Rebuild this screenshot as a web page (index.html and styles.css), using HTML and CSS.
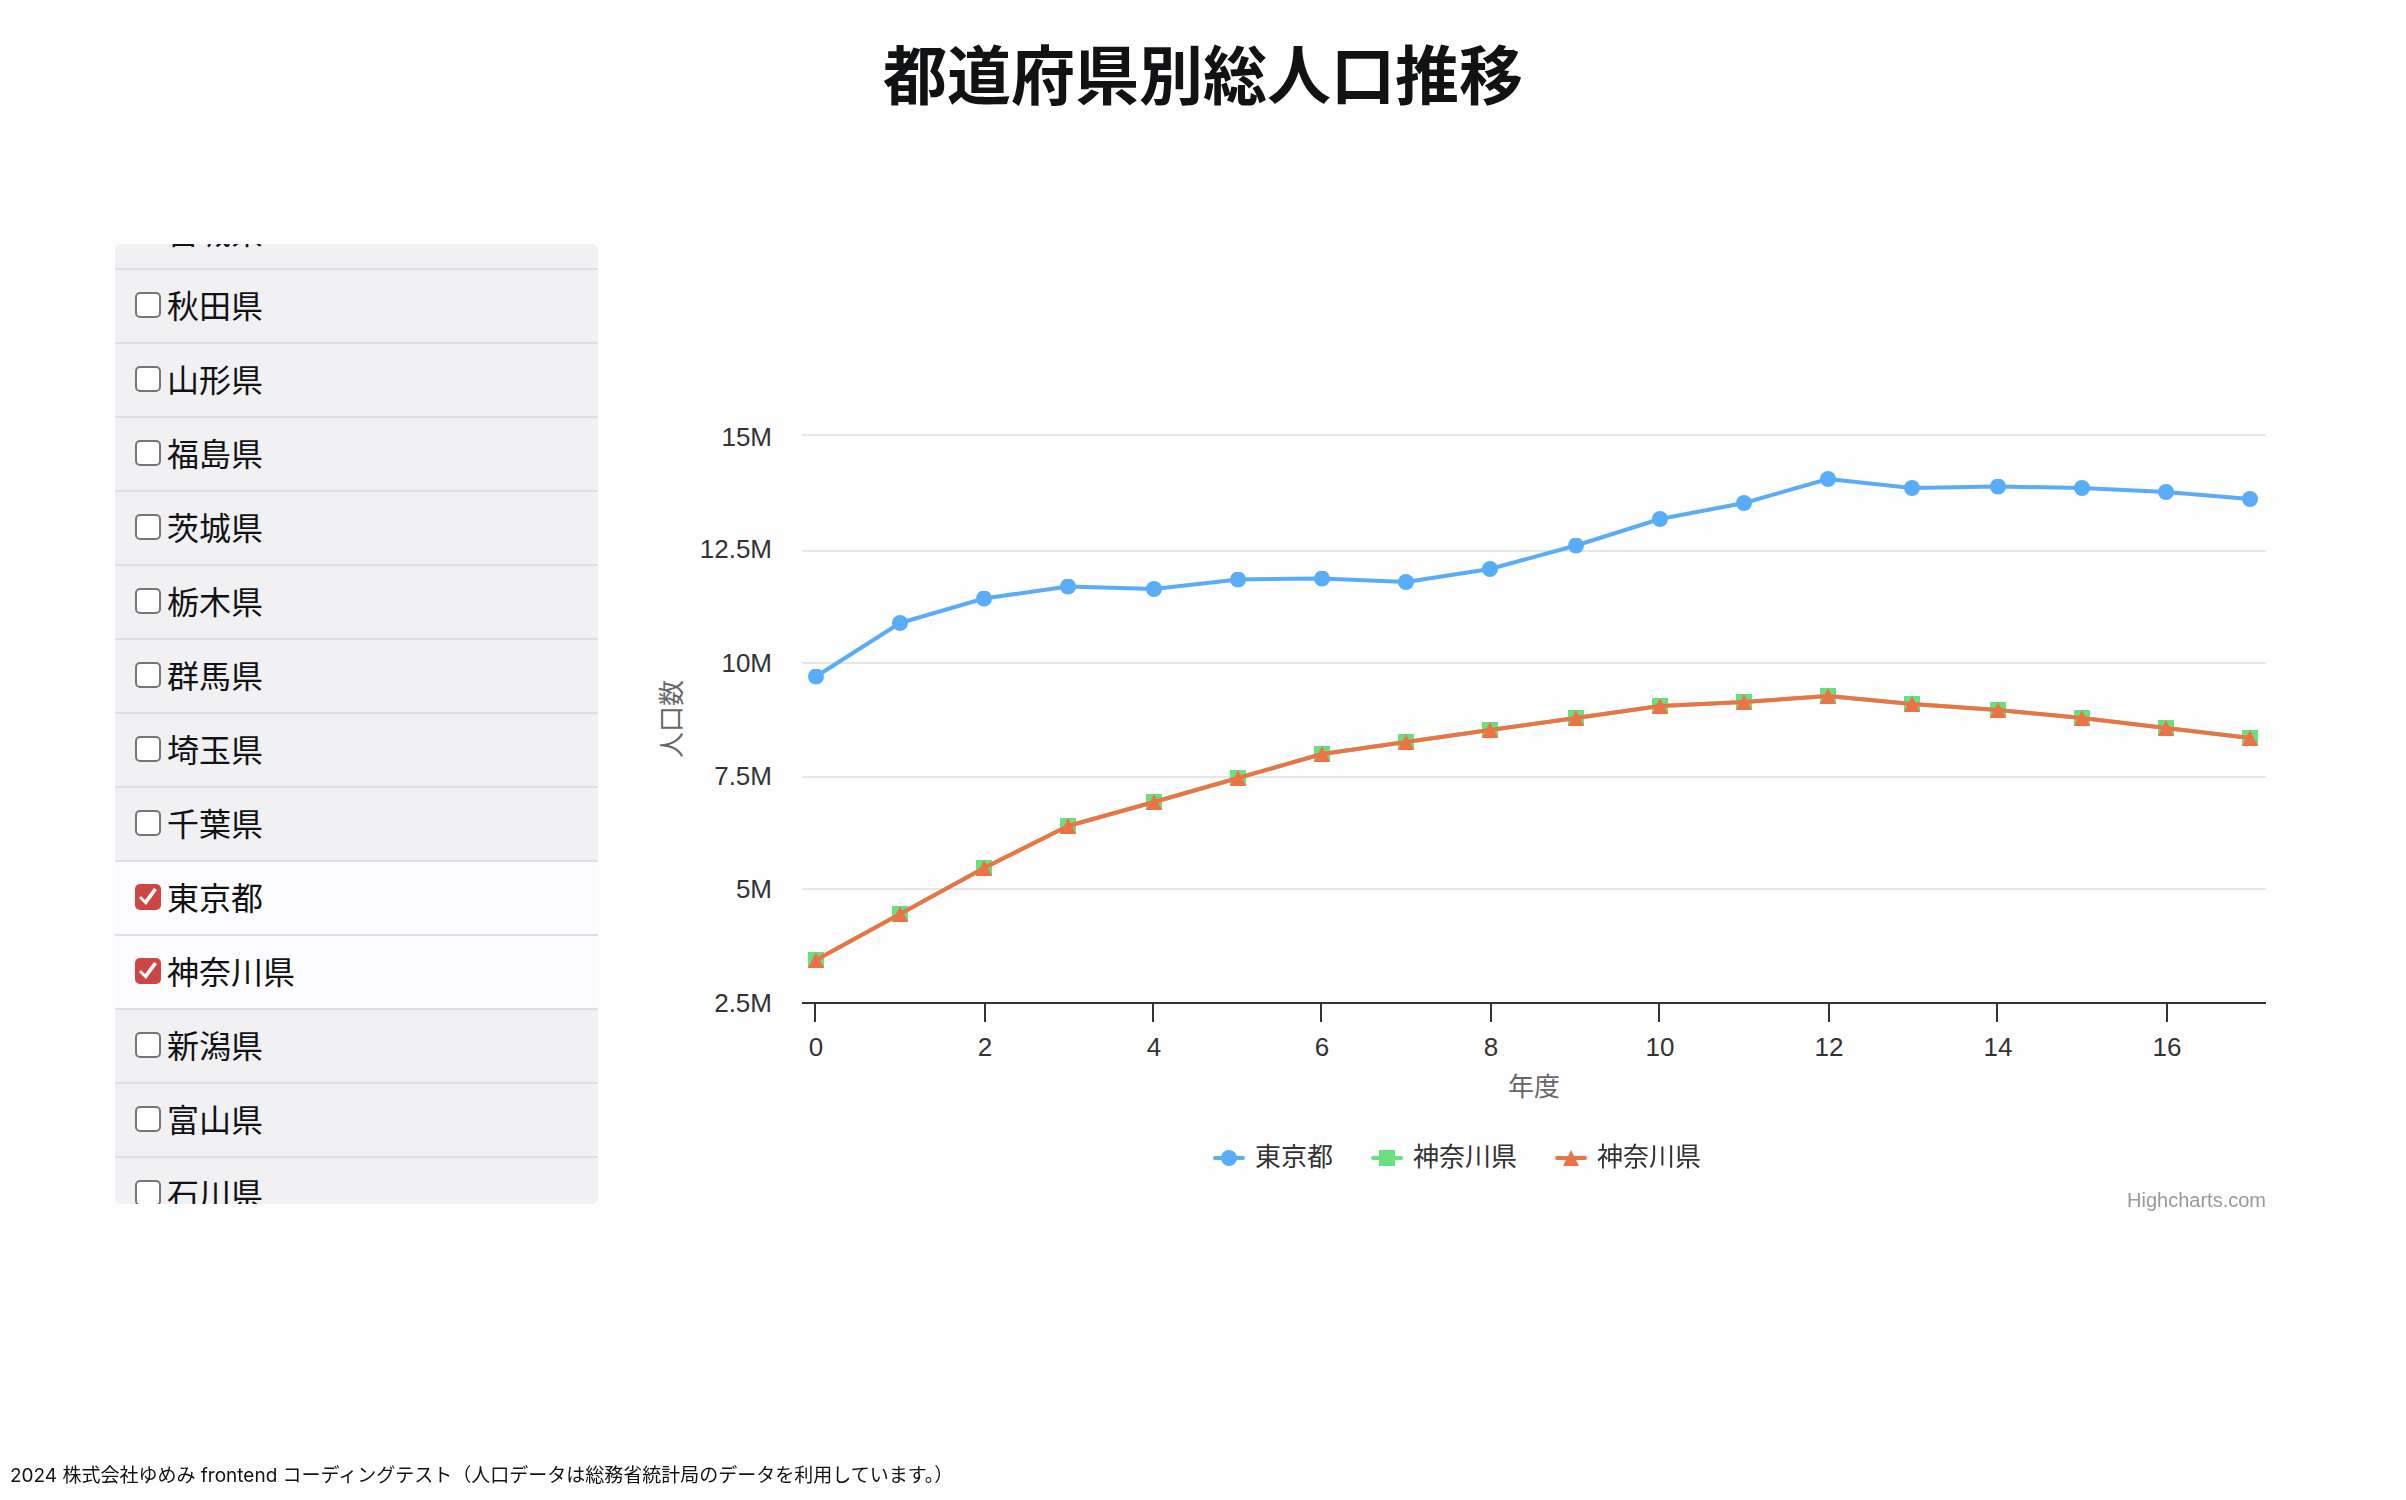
FILE: index.html
```html
<!DOCTYPE html>
<html lang="ja">
<head>
<meta charset="utf-8">
<meta name="viewport" content="width=device-width, initial-scale=1">
<title>都道府県別総人口推移</title>
<link rel="stylesheet" href="styles.css">
</head>
<body>
<header class="header"><h1 class="title">都道府県別総人口推移</h1></header>
<main class="main">
<ul class="prefs" id="prefs">
<li><label class="pref"><input type="checkbox"><span class="pref-name">北海道</span></label></li>
<li><label class="pref"><input type="checkbox"><span class="pref-name">青森県</span></label></li>
<li><label class="pref"><input type="checkbox"><span class="pref-name">岩手県</span></label></li>
<li><label class="pref"><input type="checkbox"><span class="pref-name">宮城県</span></label></li>
<li><label class="pref"><input type="checkbox"><span class="pref-name">秋田県</span></label></li>
<li><label class="pref"><input type="checkbox"><span class="pref-name">山形県</span></label></li>
<li><label class="pref"><input type="checkbox"><span class="pref-name">福島県</span></label></li>
<li><label class="pref"><input type="checkbox"><span class="pref-name">茨城県</span></label></li>
<li><label class="pref"><input type="checkbox"><span class="pref-name">栃木県</span></label></li>
<li><label class="pref"><input type="checkbox"><span class="pref-name">群馬県</span></label></li>
<li><label class="pref"><input type="checkbox"><span class="pref-name">埼玉県</span></label></li>
<li><label class="pref"><input type="checkbox"><span class="pref-name">千葉県</span></label></li>
<li><label class="pref"><input type="checkbox" checked><span class="pref-name">東京都</span></label></li>
<li><label class="pref"><input type="checkbox" checked><span class="pref-name">神奈川県</span></label></li>
<li><label class="pref"><input type="checkbox"><span class="pref-name">新潟県</span></label></li>
<li><label class="pref"><input type="checkbox"><span class="pref-name">富山県</span></label></li>
<li><label class="pref"><input type="checkbox"><span class="pref-name">石川県</span></label></li>
<li><label class="pref"><input type="checkbox"><span class="pref-name">福井県</span></label></li>
</ul>
<section class="chart" aria-label="人口推移グラフ">
<svg class="plot" viewBox="0 0 1658 700" role="img" aria-label="年度ごとの人口数">
<defs>
<marker id="dot" markerUnits="userSpaceOnUse" markerWidth="16" markerHeight="16" refX="8" refY="8"><circle class="fill-blue" cx="8" cy="8" r="8"/></marker>
<marker id="square" markerUnits="userSpaceOnUse" markerWidth="16" markerHeight="16" refX="8" refY="8"><path class="fill-green" d="M0 0h16v16H0z"/></marker>
<marker id="triangle" markerUnits="userSpaceOnUse" markerWidth="16" markerHeight="16" refX="8" refY="8"><path class="fill-orange" d="M8 0l8 16H0z"/></marker>
</defs>
<path class="grid" d="M174 19H1638M174 135H1638M174 247H1638M174 361H1638M174 473H1638"/>
<path class="axis" d="M174 587H1638M187 587v19M357 587v19M525 587v19M693 587v19M863 587v19M1031 587v19M1201 587v19M1369 587v19M1539 587v19"/>
<polyline class="series blue" points="188,260.5 272,207 356,182.5 440,170.5 526,173 610,163.5 694,162.5 778,166 862,153 948,129.5 1032,103 1116,87 1200,63 1284,72 1370,70.5 1454,72 1538,76 1622,83"/>
<polyline class="series green" points="188,544 272,498 356,452 440,410 526,386 610,362 694,338 778,326 862,314 948,302 1032,290 1116,286 1200,280 1284,288 1370,294 1454,302 1538,312 1622,322"/>
<polyline class="series orange" points="188,544 272,498 356,452 440,410 526,386 610,362 694,338 778,326 862,314 948,302 1032,290 1116,286 1200,280 1284,288 1370,294 1454,302 1538,312 1622,322"/>
<g class="tick-label" text-anchor="end">
<text x="144" y="30">15M</text><text x="144" y="142">12.5M</text><text x="144" y="256">10M</text><text x="144" y="369">7.5M</text><text x="144" y="482">5M</text><text x="144" y="596">2.5M</text>
</g>
<g class="tick-label" text-anchor="middle">
<text x="188" y="640">0</text><text x="357" y="640">2</text><text x="526" y="640">4</text><text x="694" y="640">6</text><text x="863" y="640">8</text><text x="1032" y="640">10</text><text x="1201" y="640">12</text><text x="1370" y="640">14</text><text x="1539" y="640">16</text>
</g>
<g class="axis-title" text-anchor="middle">
<text x="906" y="680">年度</text>
<text transform="translate(53 303) rotate(-90)">人口数</text>
</g>
</svg>
<div class="legend">
<button class="legend-item" type="button"><svg class="symbol" viewBox="0 0 32 16"><path class="series blue-line" d="M2 8h28"/><circle class="fill-blue" cx="16" cy="8" r="8"/></svg>東京都</button>
<button class="legend-item" type="button"><svg class="symbol" viewBox="0 0 32 16"><path class="series green-line" d="M2 8h28"/><path class="fill-green" d="M8 0h16v16H8z"/></svg>神奈川県</button>
<button class="legend-item" type="button"><svg class="symbol" viewBox="0 0 32 16"><path class="series orange-line" d="M2 8h28"/><path class="fill-orange" d="M16 0l8 16H8z"/></svg>神奈川県</button>
</div>
<a class="credits" href="https://www.highcharts.com/">Highcharts.com</a>
</section>
</main>
<footer class="footer">2024 株式会社ゆめみ frontend コーディングテスト（人口データは総務省統計局のデータを利用しています。）</footer>
<script src="script.js"></script>
</body>
</html>
```
FILE: styles.css
```css
* { box-sizing: border-box; }

body {
  margin: 0;
  min-height: 100vh;
  display: flex;
  flex-direction: column;
  background: #fefefe;
  color: #111214;
  font-family: "Noto Sans CJK JP", sans-serif;
}

.header { padding: 23px 20px 0; }

.title {
  margin: 0;
  font-size: 64px;
  line-height: 96px;
  font-weight: 700;
  text-align: center;
}

.main {
  display: grid;
  grid-template-columns: minmax(200px, 483px) 1fr;
  column-gap: 30px;
  align-items: start;
  padding: 125px 120px 0 115px;
}

.prefs {
  height: 960px;
  margin: 0;
  padding: 0;
  list-style: none;
  overflow-y: scroll;
  scrollbar-width: none;
  border-radius: 6px;
  background: #f1f1f3;
}

.pref {
  display: flex;
  align-items: center;
  gap: 6px;
  height: 74px;
  padding: 0 20px 2px;
  border-bottom: 2px solid #dfdfe1;
  font-size: 32px;
  line-height: 48px;
}

.pref-name { padding-bottom: 2px; }

.pref:has(:checked) { background: #fcfcfe; }

.pref input {
  appearance: none;
  flex: none;
  width: 26px;
  height: 26px;
  margin: 0;
  border: 2px solid #767676;
  border-radius: 5px;
  background: #fff;
}

.pref input:checked {
  border: 0;
  background: #cc4644;
}

.pref input:checked::before {
  content: "";
  display: block;
  height: 26px;
  background: #fff;
  clip-path: polygon(4px 14px, 6px 12px, 10px 16px, 19px 4px, 22px 6px, 11px 21px);
}

.chart {
  display: flex;
  flex-direction: column;
  padding-top: 172px;
  font-family: "Liberation Sans", "Noto Sans CJK JP", sans-serif;
}

.plot { width: 100%; height: auto; }

.grid { fill: none; stroke: #e6e6e6; stroke-width: 2; }
.axis { fill: none; stroke: #333; stroke-width: 2; }
.series { fill: none; stroke-width: 4; stroke-linejoin: round; stroke-linecap: round; }

.blue, .blue-line { stroke: #59adf8; }
.green, .green-line { stroke: #68e07f; }
.orange, .orange-line { stroke: #ec7345; }
.blue { marker: url(#dot); }
.green { marker: url(#square); }
.orange { marker: url(#triangle); }
.fill-blue { fill: #59adf8; }
.fill-green { fill: #68e07f; }
.fill-orange { fill: #ec7345; }

.tick-label { font-size: 26px; fill: #333; }
.axis-title { font-size: 26px; fill: #666; }

.legend {
  display: flex;
  flex-wrap: wrap;
  justify-content: center;
  column-gap: 38px;
  padding-top: 21px;
}

.legend-item {
  display: flex;
  align-items: center;
  gap: 10px;
  padding: 0;
  border: 0;
  background: none;
  color: #333;
  font: inherit;
  font-size: 26px;
  line-height: 40px;
}

.symbol { width: 32px; height: 16px; margin-top: 2px; }

.credits {
  align-self: flex-end;
  margin: 11px 20px 0 0;
  color: #999;
  font-size: 20px;
  line-height: 24px;
  text-decoration: none;
}

.footer {
  margin-top: auto;
  padding: 0 10px 10px;
  font-family: Inter, "Noto Sans CJK JP", sans-serif;
  font-size: 19px;
  line-height: 28px;
}
```
FILE: script.js
```js
// Open the list with the rows around the selected prefectures in view.
document.getElementById("prefs").scrollTop = 270;
```
